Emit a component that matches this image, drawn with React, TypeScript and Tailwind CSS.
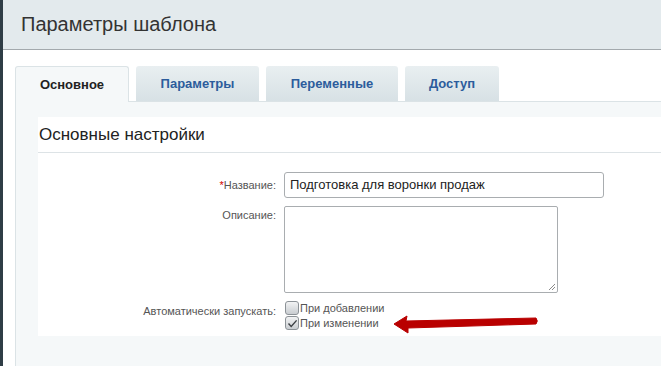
import React from "react";

const tabs = ["Основное", "Параметры", "Переменные", "Доступ"];
const tabWidths = ["w-[114px]", "w-[123px]", "w-[132px]", "w-[94px]"];

const Checkbox = ({ checked }: { checked?: boolean }) => {
  return (
    <span className="relative inline-block w-[14px] h-[14px] rounded-[3px] border border-[#8c9297] bg-gradient-to-b from-[#f2f3f4] to-[#c9cdd1]">
      {checked && (
        <svg className="absolute left-[1px] top-[1px]" width="11" height="11" viewBox="0 0 11 11">
          <path d="M1.5 5.5 L4.2 8.4 L9.6 2.4" fill="none" stroke="#3b3f43" strokeWidth="1.4" />
        </svg>
      )}
    </span>
  );
};

const App = () => {
  return (
    <div className="relative w-[661px] h-[366px] overflow-hidden bg-white flex font-['Liberation_Sans',Arial,sans-serif]">
      {/* left dark edge */}
      <div className="w-[3px] bg-[#2f3d46] shrink-0" />
      <div className="flex-1 flex flex-col">
        {/* header */}
        <div className="h-[50px] bg-[#e3eaed] border-b border-[#a3a9ad] pl-[18px] flex items-center">
          <h1 className="text-[20px] text-[#333] pb-[2px]">Параметры шаблона</h1>
        </div>

        <div className="pl-[12px] pt-[16px] flex-1 flex flex-col">
          {/* tabs */}
          <div className="flex gap-[7px] h-[35px]">
            {tabs.map((t, i) =>
              i === 0 ? (
                <div
                  key={t}
                  className={`${tabWidths[i]} relative z-10 h-[36px] bg-[#f5f8f9] border border-b-0 border-[#dbe3e6] rounded-t-[3px] flex items-center justify-center text-[13px] font-bold text-[#222]`}
                >
                  {t}
                </div>
              ) : (
                <div
                  key={t}
                  className={`${tabWidths[i]} h-[35px] bg-gradient-to-b from-[#e9eff1] to-[#d7e1e5] rounded-t-[3px] flex items-center justify-center text-[13px] font-bold text-[#2c5c9c]`}
                >
                  {t}
                </div>
              )
            )}
          </div>

          {/* tab content */}
          <div className="flex-1 bg-[#f5f8f9] border-l border-t border-[#dbe3e6] pl-[22px] pt-[15px]">
            <div className="bg-white pb-[6px]">
              <div className="h-[36px] border-b border-[#dde3e6] pl-[1px] flex items-center">
                <h2 className="text-[17px] text-[#222]">Основные настройки</h2>
              </div>

              <div className="pt-[19px] text-[11px] text-[#555]">
                {/* name */}
                <div className="flex items-center h-[26px]">
                  <label className="w-[246px] text-right pr-[8px]">
                    <span className="text-[#d10000]">*</span>Название:
                  </label>
                  <div className="w-[320px] h-[26px] border border-[#a9adb0] rounded-[3px] px-[5px] flex items-center text-[13px] text-[#222]">
                    Подготовка для воронки продаж
                  </div>
                </div>

                {/* description */}
                <div className="flex mt-[8px]">
                  <label className="w-[246px] text-right pr-[8px] pt-[1px]">Описание:</label>
                  <div className="relative w-[274px] h-[87px] border border-[#a9adb0] rounded-[2px]">
                    <svg className="absolute right-[1px] bottom-[1px]" width="9" height="9" viewBox="0 0 9 9">
                      <path d="M8 2 L2 8 M8 5 L5 8" stroke="#8a8a8a" strokeWidth="1" />
                    </svg>
                  </div>
                </div>

                {/* auto start */}
                <div className="flex mt-[8px]">
                  <label className="w-[246px] text-right pr-[8px] pt-[2px]">Автоматически запускать:</label>
                  <div className="flex flex-col pl-[1px]">
                    <div className="flex items-center gap-[1px] h-[14px]">
                      <Checkbox />
                      <span>При добавлении</span>
                    </div>
                    <div className="flex items-center gap-[1px] h-[14px] mt-[1px]">
                      <Checkbox checked />
                      <span>При изменении</span>
                    </div>
                  </div>
                </div>
              </div>
            </div>
          </div>
        </div>
      </div>

      {/* red arrow annotation */}
      <svg className="absolute left-[390px] top-[312px]" width="152" height="26" viewBox="0 0 152 26">
        <path
          d="M4 12 L17 4 L16 9 L146 6 Q148.5 9 146 12 L18 16 L18 21 Z"
          fill="#b90000"
          stroke="#b90000"
          strokeWidth="1"
          strokeLinejoin="round"
        />
      </svg>
    </div>
  );
};

export default App;
